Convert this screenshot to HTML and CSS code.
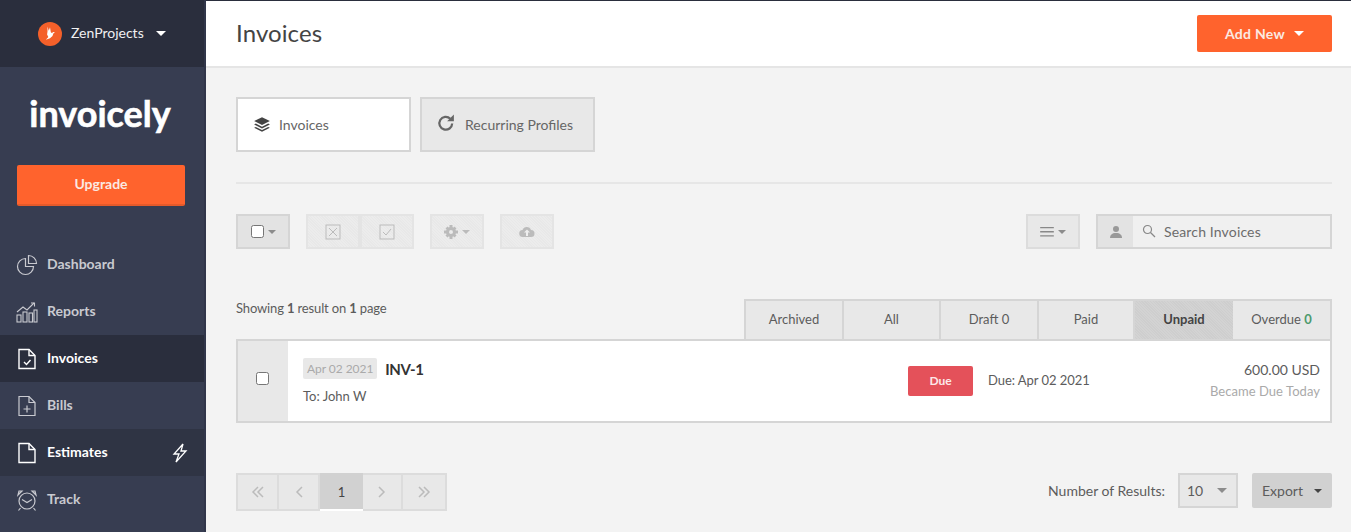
FILE: index.html
```html
<!DOCTYPE html>
<html lang="en">
<head>
<meta charset="utf-8">
<title>Invoices</title>
<link rel="stylesheet" href="styles.css">
</head>
<body>
<div class="app">
  <aside class="sidebar">
    <div class="org">
      <span class="org-logo"><svg viewBox="0 0 24 24" width="20" height="20"><path d="M9 3l1.500 5L12 4l1 6 1.500 1 1-1.500 2.500.5-2 1.500-1 3-3 2.500-5 2 3-3.500-1.500-3L9 9z" fill="#fff"/></svg></span>
      <span class="org-name">ZenProjects</span>
      <span class="caret caret-white caret-lg"></span>
    </div>
    <div class="brand">invoicely</div>
    <a class="upgrade">Upgrade</a>
    <nav class="nav">
      <a class="nav-item">
        <svg class="nav-icon" viewBox="0 0 22 22" fill="none" stroke="currentColor" stroke-width="1.2"><path d="M9.500 4.500a8 8 0 1 0 8 8h-8z"/><path d="M12.500 1.500a8 8 0 0 1 8 8h-8z"/></svg>
        <span class="nav-label">Dashboard</span>
      </a>
      <a class="nav-item">
        <svg class="nav-icon" viewBox="0 0 22 22" fill="none" stroke="currentColor" stroke-width="1.1"><rect x="1" y="14" width="4" height="7"/><rect x="7" y="11" width="4" height="10"/><rect x="13" y="12" width="3.500" height="9"/><rect x="18" y="9" width="3" height="12"/><path d="M1 11l6-5 4 3 7-7"/><path d="M15 2h3.500v3.500"/></svg>
        <span class="nav-label">Reports</span>
      </a>
      <a class="nav-item is-active">
        <svg class="nav-icon" viewBox="0 0 22 22" fill="none" stroke="currentColor" stroke-width="1.4"><path d="M3 1.500h10l6 6v13H3z"/><path d="M13 1.500v6h6"/><path d="M8 14l2.500 2.500L14.500 12"/></svg>
        <span class="nav-label">Invoices</span>
      </a>
      <a class="nav-item">
        <svg class="nav-icon" viewBox="0 0 22 22" fill="none" stroke="currentColor" stroke-width="1.2"><path d="M3 1.500h10l6 6v13H3z"/><path d="M13 1.500v6h6"/><path d="M11 10.500v7M7.500 14h7"/></svg>
        <span class="nav-label">Bills</span>
      </a>
      <a class="nav-item is-soft">
        <svg class="nav-icon" viewBox="0 0 22 22" fill="none" stroke="currentColor" stroke-width="1.4"><path d="M3 1.500h10l6 6v13H3z"/><path d="M13 1.500v6h6"/></svg>
        <span class="nav-label">Estimates</span>
        <svg class="bolt" viewBox="0 0 16 20" fill="none" stroke="currentColor" stroke-width="1.300"><path d="M11 1L2 11h5l-3 8 10-11H9z"/></svg>
      </a>
      <a class="nav-item">
        <svg class="nav-icon" viewBox="0 0 22 22" fill="none" stroke="currentColor" stroke-width="1.2"><circle cx="11" cy="12" r="8"/><path d="M6 10.500l5 3 5-3"/><path d="M2 6l4-4H3zM20 6l-4-4h3zM4.500 19l-2 2.500M17.500 19l2 2.500"/></svg>
        <span class="nav-label">Track</span>
      </a>
    </nav>
  </aside>

  <main class="main">
    <header class="topbar">
      <h1 class="title">Invoices</h1>
      <a class="add-new">Add New<span class="caret caret-white"></span></a>
    </header>
    <div class="content">
      <div class="section-tabs">
        <a class="section-tab is-current">
          <svg class="section-icon-stack" viewBox="0 0 16 16" fill="#444"><path d="M8 1l7 3.500L8 8 1 4.500z"/><path d="M1 7.500l1.500-.8L8 9.500l5.500-2.800 1.500.8L8 11z"/><path d="M1 10.500l1.500-.8L8 12.500l5.500-2.800 1.500.8L8 14z"/></svg>
          Invoices
        </a>
        <a class="section-tab">
          <svg class="section-icon-redo" viewBox="0 0 16 16" fill="none" stroke="#666" stroke-width="2"><path d="M13.500 8.500a5.700 5.700 0 1 1-1.700-4.300"/><path d="M15 .5v6H9z" fill="#666" stroke="none"/></svg>
          Recurring Profiles
        </a>
      </div>
      <hr class="divider">
      <div class="toolbar">
        <div class="tool tool-check"><span class="fake-check"></span><span class="caret caret-grey"></span></div>
        <div class="tool-group">
          <div class="tool is-disabled tool-half"><svg width="16" height="16" viewBox="0 0 16 16" fill="none" stroke="#bbb"><rect x="1" y="1" width="14" height="14"/><path d="M4 4l8 8M12 4l-8 8"/></svg></div>
          <div class="tool is-disabled tool-half"><svg width="16" height="16" viewBox="0 0 16 16" fill="none" stroke="#bbb"><rect x="1" y="1" width="14" height="14"/><path d="M4 8l3 3 5-6"/></svg></div>
        </div>
        <div class="tool is-disabled"><svg width="14" height="14" viewBox="0 0 14 14"><circle cx="7" cy="7" r="3.500" fill="none" stroke="#bbb" stroke-width="3"/><path d="M5.500 0h3v3h-3zM5.500 11h3v3h-3zM0 5.500h3v3H0zM11 5.500h3v3h-3zM1.500 3.500l2-2 2 2-2 2zM8.500 10.500l2-2 2 2-2 2zM10.500 1.500l2 2-2 2-2-2zM3.500 8.500l2 2-2 2-2-2z" fill="#bbb"/></svg><span class="caret caret-light"></span></div>
        <div class="tool is-disabled"><svg width="16" height="12" viewBox="0 0 16 12"><path d="M4 11a3.500 3.500 0 0 1-.5-7A4.500 4.500 0 0 1 12 4a3.500 3.500 0 0 1 0 7z" fill="#bbb"/><path d="M8 3.500l-3 3h2V10h2V6.500h2z" fill="#eee"/></svg></div>
        <div class="tool-spacer"></div>
        <div class="tool"><svg width="14" height="10" viewBox="0 0 15 11" fill="#888"><path d="M0 0h15v1.500H0zM0 4.500h15V6H0zM0 9h15v1.500H0z"/></svg><span class="caret caret-grey"></span></div>
        <div class="search">
          <span class="search-user"><svg width="14" height="14" viewBox="0 0 14 14" fill="#999"><circle cx="7" cy="4" r="3"/><path d="M1 13c0-3 2-5 6-5s6 2 6 5z"/></svg></span>
          <svg class="search-glass" width="14" height="14" viewBox="0 0 14 14" fill="none" stroke="#888" stroke-width="1.200"><circle cx="5.500" cy="5.500" r="4"/><path d="M8.500 8.500l4.500 4.500"/></svg>
          <span class="search-text">Search Invoices</span>
        </div>
      </div>
      <div class="list-head">
        <p class="summary">Showing <b>1</b> result on <b>1</b> page</p>
        <div class="filters">
          <a class="filter">Archived</a>
          <a class="filter">All</a>
          <a class="filter">Draft 0</a>
          <a class="filter">Paid</a>
          <a class="filter is-on">Unpaid</a>
          <a class="filter">Overdue <b class="count-green">0</b></a>
        </div>
      </div>
      <div class="row">
        <div class="row-check"><span class="fake-check"></span></div>
        <div class="row-info">
          <div class="row-line"><span class="date-chip">Apr 02 2021</span><span class="inv-no">INV-1</span></div>
          <div class="row-to">To: John W</div>
        </div>
        <span class="badge-due">Due</span>
        <span class="due-date">Due: Apr 02 2021</span>
        <div class="row-amount">
          <div class="amount">600.00 USD</div>
          <div class="amount-note">Became Due Today</div>
        </div>
      </div>
      <div class="list-foot">
        <div class="pager">
          <a class="page"><svg width="14" height="12" viewBox="0 0 14 12" fill="none" stroke="#bbb" stroke-width="1.500"><path d="M7 1L2 6l5 5M12 1L7 6l5 5"/></svg></a>
          <a class="page"><svg width="8" height="12" viewBox="0 0 8 12" fill="none" stroke="#bbb" stroke-width="1.500"><path d="M7 1L2 6l5 5"/></svg></a>
          <a class="page page-on">1</a>
          <a class="page"><svg width="8" height="12" viewBox="0 0 8 12" fill="none" stroke="#bbb" stroke-width="1.500"><path d="M1 1l5 5-5 5"/></svg></a>
          <a class="page"><svg width="14" height="12" viewBox="0 0 14 12" fill="none" stroke="#bbb" stroke-width="1.500"><path d="M2 1l5 5-5 5M7 1l5 5-5 5"/></svg></a>
        </div>
        <div class="foot-right">
          <span class="foot-label">Number of Results:</span>
          <div class="per-page"><span>10</span><span class="caret caret-grey caret-md"></span></div>
          <a class="export">Export<span class="caret caret-dark"></span></a>
        </div>
      </div>
    </div>
  </main>
</div>
</body>
</html>
```
FILE: styles.css
```css
* { box-sizing: border-box; }
html, body { margin: 0; height: 100%; overflow: hidden; }
body { font-family: Lato, "Liberation Sans", sans-serif; font-size: 14px; color: #5c5c5c; background: #f3f3f3; }
a { display: block; }
.app { display: flex; height: 532px; }

.sidebar { width: 206px; flex: none; background: #373d51; border-right: 2px solid #31364a; color: #d5d6da; }
.org { height: 67px; background: #2a2e3d; display: flex; align-items: center; padding-left: 38px; }
.org-logo { width: 24px; height: 24px; border-radius: 50%; background: #f4602a; display: flex; align-items: center; justify-content: center; }
.org-name { color: #f0f0f2; margin-left: 9px; font-size: 14px; margin-top: -2px; }
.caret { display: inline-block; width: 0; height: 0; border-left: 4px solid transparent; border-right: 4px solid transparent; border-top: 4px solid #999; }
.caret-white { border-top-color: #fff; }
.caret-lg { margin-left: 12px; border-left-width: 5px; border-right-width: 5px; border-top-width: 5px; }
.caret-md { border-left-width: 5px; border-right-width: 5px; border-top-width: 5px; }
.caret-grey { border-top-color: #8c8c8c; margin-left: 4px; }
.caret-light { border-top-color: #bbb; margin-left: 4px; }
.caret-dark { border-top-color: #444; margin-left: 11px; }
.brand { height: 98px; padding-top: 21px; text-align: center; color: #fff; font-family: Lato, sans-serif; font-size: 36px; font-weight: 700; line-height: 50px; padding-right: 4px; -webkit-text-stroke: .6px #fff; }
.upgrade { margin-left: 17px; width: 168px; height: 41px; background: #ff632d; border-bottom: 2px solid #e55a2a; border-radius: 2px; color: #fbe9e2; font-size: 14px; font-weight: 700; text-align: center; line-height: 38px; }
.nav { margin-top: 35px; }
.nav-item { height: 47px; display: flex; align-items: center; padding-left: 16px; font-size: 14px; font-weight: 700; color: #c9cad0; }
.nav-item.is-active { background: #2a2e3d; color: #fff; }
.nav-item.is-soft { background: #2f3444; color: #fff; }
.nav-icon { width: 22px; height: 22px; margin-right: 9px; flex: none; }
.nav-label { margin-top: -2px; }
.bolt { width: 16px; height: 20px; margin-left: auto; margin-right: 16px; }

.main { flex: 1; min-width: 0; display: flex; flex-direction: column; }
.topbar { height: 68px; background: #fff; border-top: 1px solid #2a2e3d; border-bottom: 2px solid #e5e5e5; padding: 0 19px 0 30px; display: flex; align-items: center; justify-content: space-between; }
.title { margin: -2px 0 0; font-size: 24px; font-weight: 400; color: #444; letter-spacing: .1px; }
.add-new { width: 135px; height: 37px; background: #ff632d; border-radius: 2px; color: #fbe9e2; font-weight: 700; display: flex; align-items: center; justify-content: center; font-size: 14px; margin-top: -1px; letter-spacing: .3px; }
.add-new .caret { margin-left: 9px; border-left-width: 5px; border-right-width: 5px; border-top-width: 5px; }
.content { padding: 29px 19px 0 30px; }

.section-tabs { display: flex; gap: 9px; }
.section-tab { width: 175px; height: 55px; border: 2px solid #d5d5d5; background: #e8e8e8; display: flex; align-items: center; padding-left: 15px; font-size: 14px; color: #666; }
.section-tab.is-current { background: #fff; }
.section-icon-stack { width: 18px; height: 18px; margin-right: 8px; }
.section-icon-redo { width: 18px; height: 18px; margin-right: 10px; margin-top: -3px; }
.divider { border: 0; height: 2px; background: #e6e6e6; margin: 30px 0 30px; }

.toolbar { display: flex; gap: 16px; height: 35px; }
.tool { width: 54px; height: 35px; border: 2px solid #dcdcdc; background: #e8e8e8; display: flex; align-items: center; justify-content: center; }
.tool-check { border-color: #d5d5d5; background: #e3e3e3; }
.tool-group { display: flex; }
.tool.is-disabled { background: repeating-linear-gradient(45deg, #ececec 0 1px, #e8e8e8 1px 2px); border-color: #e4e4e4; }
.tool-spacer { flex: 1; }
.fake-check { width: 13px; height: 13px; background: #fff; border: 1px solid #767676; border-radius: 2.500px; display: block; }
.search { width: 236px; height: 35px; border: 2px solid #d5d5d5; display: flex; align-items: center; background: #f0f0f0; }
.search-user { width: 35px; height: 31px; background: #e3e3e3; display: flex; align-items: center; justify-content: center; }
.search-glass { margin-left: 9px; margin-right: 8px; margin-top: -2px; }
.search-text { font-size: 14px; color: #6c6c6c; letter-spacing: .15px; }

.list-head { margin-top: 50px; display: flex; justify-content: space-between; align-items: flex-start; height: 40px; }
.summary { margin: 0; font-size: 13px; color: #5c5c5c; line-height: 18px; letter-spacing: -.15px; }
.summary b { font-weight: 700; }
.filters { display: grid; grid-template-columns: 98px 97px 98px 96px 98px 1fr; height: 40px; border: 2px solid #d5d5d5; border-bottom: 0; width: 588px; }
.filter { background: #e8e8e8; border-right: 2px solid #d5d5d5; font-size: 13px; text-align: center; line-height: 37px; color: #5c5c5c; }
.filter:last-child { border-right: 0; }
.filter.is-on { background: repeating-linear-gradient(45deg, #d3d3d3 0 1px, #cecece 1px 2px); border-right: 0; color: #444; font-weight: 700; }
.count-green { color: #4d9a6d; font-weight: 700; }

.row { height: 84px; border: 2px solid #d5d5d5; background: #fff; display: flex; align-items: center; }
.row-check { width: 50px; height: 100%; background: #e8e8e8; display: flex; align-items: center; justify-content: center; flex: none; padding: 0 2px 6px 0; }
.row-info { margin-left: 15px; width: 605px; flex: none; }
.row-line { display: flex; align-items: center; gap: 8px; }
.date-chip { background: #e8e8e8; color: #aaa; font-size: 12px; padding: 0 4px; line-height: 21px; height: 21px; border-radius: 2px; letter-spacing: -.05px; }
.inv-no { font-size: 15px; font-weight: 700; color: #333; letter-spacing: -.4px; }
.row-to { margin-top: 9px; font-size: 13px; color: #5c5c5c; }
.badge-due { width: 65px; height: 30px; background: #e4515a; border-radius: 2px; color: #fde8e8; font-size: 12px; font-weight: 700; text-align: center; line-height: 30px; }
.due-date { margin: -3px 0 0 15px; font-size: 13px; color: #5c5c5c; letter-spacing: -.05px; }
.row-amount { margin-left: auto; padding-right: 10px; text-align: right; margin-top: -2px; }
.amount { font-size: 14px; color: #5c5c5c; }
.amount-note { font-size: 13px; color: #aaa; margin-top: 5px; letter-spacing: .05px; }

.list-foot { margin-top: 50px; display: flex; justify-content: space-between; align-items: flex-start; }
.pager { display: grid; grid-template-columns: 41px 41px 43px 40px 1fr; border: 2px solid #dcdcdc; height: 38px; width: 211px; }
.page { background: #e8e8e8; border-right: 2px solid #dcdcdc; display: flex; align-items: center; justify-content: center; font-size: 13px; color: #444; }
.page:last-child { border-right: 0; }
.page-on { background: #d1d1d1; border-right: 0; box-shadow: 0 2px 0 #fff, 0 -2px 0 #d1d1d1; }
.foot-right { display: flex; align-items: center; height: 35px; }
.foot-label { font-size: 14px; color: #5c5c5c; margin-right: 13px; }
.per-page { width: 60px; height: 35px; border: 2px solid #d5d5d5; background: #e8e8e8; display: flex; align-items: center; justify-content: space-between; padding: 0 9px 0 7px; font-size: 14px; }
.export { width: 80px; height: 35px; margin-left: 14px; background: #d1d1d1; border-radius: 2px; display: flex; align-items: center; justify-content: center; font-size: 14px; }
```
